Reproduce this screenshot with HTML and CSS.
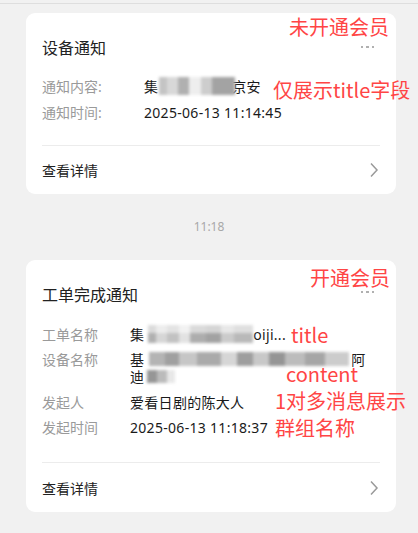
FILE: index.html
```html
<!DOCTYPE html>
<html lang="zh-CN">
<head>
<meta charset="utf-8">
<link rel="stylesheet" href="styles.css">
</head>
<body>
<div class="page">
  <div class="topline"></div>

  <div class="card card-a">
    <div class="card-head">
      <span class="card-title">设备通知</span>
      <span class="more"><i></i><i></i><i></i></span>
    </div>
    <div class="rows">
      <div class="row"><span class="label">通知内容:</span><span class="value">集<span class="blur blur-a"></span>京安</span></div>
      <div class="row"><span class="label">通知时间:</span><span class="value">2025-06-13 11:14:45</span></div>
    </div>
    <div class="card-foot">
      <span>查看详情</span>
      <svg class="chev" width="10" height="16" viewBox="0 0 10 16"><path d="M2 1.5 L8 8 L2 14.5" fill="none" stroke="#9a9a9a" stroke-width="1.5"/></svg>
    </div>
    <span class="note note-a1">未开通会员</span>
    <span class="note note-a2">仅展示title字段</span>
  </div>

  <div class="time">11:18</div>

  <div class="card card-b">
    <div class="card-head">
      <span class="card-title">工单完成通知</span>
      <span class="more"><i></i><i></i><i></i></span>
    </div>
    <div class="rows">
      <div class="row"><span class="label">工单名称</span><span class="value">集<span class="blur blur-b1"></span>oiji...</span></div>
      <div class="row"><span class="label">设备名称</span><span class="value"><span class="line">基<span class="blur blur-b2"></span>阿</span><span class="line">迪<span class="blur blur-b3"></span></span></span></div>
      <div class="row"><span class="label">发起人</span><span class="value">爱看日剧的陈大人</span></div>
      <div class="row"><span class="label">发起时间</span><span class="value">2025-06-13 11:18:37</span></div>
    </div>
    <div class="card-foot">
      <span>查看详情</span>
      <svg class="chev" width="10" height="16" viewBox="0 0 10 16"><path d="M2 1.5 L8 8 L2 14.5" fill="none" stroke="#9a9a9a" stroke-width="1.5"/></svg>
    </div>
    <span class="note note-b1">开通会员</span>
    <span class="note note-b2">title</span>
    <span class="note note-b3">content</span>
    <span class="note note-b4">1对多消息展示</span>
    <span class="note note-b5">群组名称</span>
  </div>
</div>
</body>
</html>
```

FILE: styles.css
```css
html, body {
  margin: 0;
  padding: 0;
  background: #f1f1f1;
}
body {
  font-family: "Noto Sans", "Noto Sans CJK SC", sans-serif;
  color: #222;
  width: 418px;
  height: 533px;
  overflow: hidden;
}
.page {
  padding-top: 3px;
}
.topline {
  height: 1px;
  background: #dedede;
  margin-bottom: 9px;
}
.card {
  position: relative;
  margin-left: 26px;
  width: 370px;
  box-sizing: border-box;
  background: #fff;
  border-radius: 9px;
  padding: 0 16px;
}
.card-head {
  display: flex;
  justify-content: space-between;
  align-items: center;
  padding-top: 24px;
  height: 22px;
}
.card-title {
  font-size: 16px;
  line-height: 22px;
  color: #222;
}
.more {
  display: flex;
  gap: 3px;
  margin-right: 6px;
  margin-top: -2px;
}
.card-b .more {
  margin-top: -5px;
}
.more i {
  display: block;
  width: 2.5px;
  height: 2.5px;
  background: #b0b0b0;
}
.rows {
  display: flex;
  flex-direction: column;
  gap: 8.5px;
  padding-top: 19px;
  padding-bottom: 24px;
  border-bottom: 1px solid #ececec;
}
.card-b .rows {
  padding-top: 20px;
  padding-bottom: 26px;
}
.row {
  display: flex;
  font-size: 14px;
  line-height: 17px;
}
.label {
  color: #9a9a9a;
  flex: none;
  width: 102px;
}
.card-b .label {
  width: 88px;
}
.value {
  display: block;
  color: #1a1a1a;
  letter-spacing: 0.3px;
  white-space: nowrap;
}
.line {
  display: block;
  height: 17px;
}
.card-foot {
  display: flex;
  justify-content: space-between;
  align-items: center;
  height: 48px;
  font-size: 14px;
  color: #222;
}
.card-b .card-foot {
  height: 49px;
}
.chev {
  margin-right: 1px;
}
.blur {
  display: inline-block;
  vertical-align: top;
  filter: blur(1.6px);
}
.blur-a {
  width: 76px;
  height: 18px;
  margin-top: -1px;
  margin-bottom: -1px;
  margin-right: -3px;
  margin-left: 1px;
  background:
    linear-gradient(90deg, #c4c4c4 0 10%, #d8d8d8 10% 25%, #b0b0b0 25% 40%, #eeeeee 40% 55%, #cdcdcd 55% 70%, #a3a3a3 70% 100%);
}
.blur-b1 {
  width: 105px;
  height: 18px;
  margin-top: -1px;
  margin-bottom: -1px;
  margin-left: 4px;
  background:
    linear-gradient(180deg, rgba(255,255,255,0.55) 0 45%, rgba(255,255,255,0) 45%),
    linear-gradient(90deg, #b0b0b0 0 8%, #d6d6d6 8% 18%, #c2c2c2 18% 30%, #e2e2e2 30% 40%, #adadad 40% 55%, #a2a2a2 55% 70%, #cbcbcb 70% 82%, #b9b9b9 82% 100%);
}
.blur-b2 {
  width: 200px;
  height: 14px;
  margin-top: 1px;
  margin-left: 5px;
  margin-right: 2px;
  background:
    linear-gradient(90deg, #b4b4b4 0 8%, #a0a0a0 8% 15%, #c6c6c6 15% 24%, #aaaaaa 24% 36%, #d6d6d6 36% 44%, #9e9e9e 44% 52%, #c8c8c8 52% 60%, #959595 60% 68%, #bcbcbc 68% 78%, #a6a6a6 78% 88%, #cccccc 88% 100%);
}
.blur-b3 {
  width: 28px;
  height: 13px;
  margin-top: 2px;
  margin-left: 3px;
  background: linear-gradient(90deg, #969696 0 35%, #bbbbbb 35% 70%, #e8e8e8 70% 100%);
}
.time {
  height: 66px;
  box-sizing: border-box;
  display: flex;
  align-items: center;
  justify-content: center;
  font-size: 12px;
  color: #a8a8a8;
}
.note {
  position: absolute;
  font-size: 20px;
  line-height: 24px;
  color: #ff4545;
  white-space: nowrap;
  font-family: "Noto Sans CJK SC", sans-serif;
}
.note-a1 { left: 263px; top: 2px; }
.note-a2 { left: 247px; top: 65px; }
.note-b1 { left: 284px; top: 6px; }
.note-b2 { left: 265px; top: 63px; }
.note-b3 { left: 260px; top: 102px; }
.note-b4 { left: 249px; top: 129px; }
.note-b5 { left: 249px; top: 156px; }
```
